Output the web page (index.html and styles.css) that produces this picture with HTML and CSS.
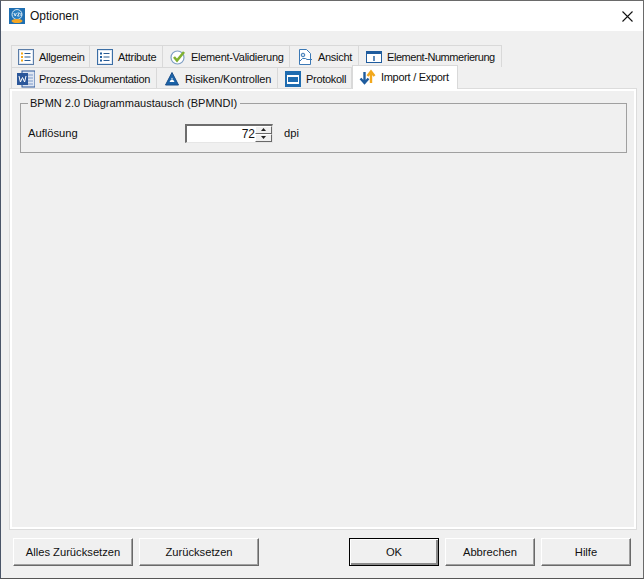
FILE: index.html
```html
<!DOCTYPE html>
<html lang="de">
<head>
<meta charset="utf-8">
<title>Optionen</title>
<link rel="stylesheet" href="styles.css">
</head>
<body>
<div class="window">
  <header class="titlebar">
    <svg class="appicon" width="16" height="16" viewBox="0 0 16 16"><rect width="16" height="16" fill="#1f6fb2"/><circle cx="8" cy="6.5" r="5" fill="#2a7fc0" stroke="#d5e6f3" stroke-width="1"/><path d="M5 5l1.2 3L7.4 5M8.5 5h2l-2 3h2M12 5v3" fill="none" stroke="#fff" stroke-width=".8"/><ellipse cx="8" cy="13" rx="5.5" ry="2" fill="#f5a623"/></svg>
    <span class="title">Optionen</span>
    <svg class="close" width="11" height="11" viewBox="0 0 11 11"><path d="M.5.5l10 10M10.500.5l-10 10" stroke="#111" stroke-width="1.1" fill="none"/></svg>
  </header>
  <main class="content">
    <div class="tabs">
      <div class="tabrow">
        <div class="tab w79"><svg class="ico" viewBox="0 0 16 16"><rect x=".5" y=".5" width="15" height="15" fill="#dfe8f3" stroke="#5b7da8"/><rect x="2" y="2" width="12" height="12" fill="#fff"/><path d="M6.500 4.500h6M6.500 8h6M6.500 11.500h6" stroke="#2b5c94"/><path d="M3 4.500h2M3 8h2M3 11.500h2" stroke="#f2a81d" stroke-width="2"/></svg>Allgemein</div>
        <div class="tab w73"><svg class="ico" viewBox="0 0 16 16"><rect x=".5" y=".5" width="15" height="15" fill="#dfe8f3" stroke="#3b6ea5"/><rect x="2" y="2" width="12" height="12" fill="#fff"/><path d="M6.500 4.500h6M6.500 8h6M6.500 11.500h6" stroke="#2b5c94"/><path d="M3 4.500h2M3 8h2M3 11.500h2" stroke="#1f5c9e" stroke-width="2"/></svg>Attribute</div>
        <div class="tab w127"><svg class="ico" viewBox="0 0 16 16"><circle cx="7.500" cy="8.500" r="6.500" fill="#fff" stroke="#7f9fc4" stroke-width="1.2"/><path d="M4 8l3 3.500L14 3" fill="none" stroke="#80b030" stroke-width="2.6"/></svg>Element-Validierung</div>
        <div class="tab w69"><svg class="ico" viewBox="0 0 16 16"><path d="M2.500.5h7l4 4v11h-11z" fill="#fff" stroke="#3b78b5"/><circle cx="6" cy="6" r="1.800" fill="#cfe0f0" stroke="#3b78b5"/><path d="M2.500 12.500l3-3h3l1.500 1h5" fill="none" stroke="#3b78b5"/></svg>Ansicht</div>
        <div class="tab w143 tight"><svg class="ico" viewBox="0 0 16 16"><rect x=".5" y="2.500" width="15" height="11" fill="#fff" stroke="#1f5c9e"/><rect x="0" y="2" width="16" height="3" fill="#1f5c9e"/><path d="M8 7v5" stroke="#1f5c9e" stroke-width="1.400"/></svg>Element-Nummerierung</div>
      </div>
      <div class="tabrow">
        <div class="tab w146"><svg class="ico ico-wide" viewBox="0 0 18 18"><rect x="5" y="1" width="13" height="16" fill="#dfe6f2" stroke="#2b579a"/><path d="M11 5h5M11 8h5M11 11h5M11 14h5" stroke="#7c9ac9"/><rect x="0" y="3" width="11" height="12" fill="#2b579a"/><path d="M2 6l1.400 6L5.500 7.500 7.600 12 9 6" fill="none" stroke="#fff"/></svg>Prozess-Dokumentation</div>
        <div class="tab w121 loose"><svg class="ico" viewBox="0 0 16 16"><path d="M8 1.500l6.500 12.500h-13z" fill="#1a62a8" stroke="#1a4f8a"/><path d="M8 6.500l1 2h-2zM5.500 11h5l-1.200-2h-2.600z" fill="#fff"/></svg>Risiken/Kontrollen</div>
        <div class="tab w74"><svg class="ico ico-wide" viewBox="0 0 18 18"><rect x="1" y="1" width="16" height="16" fill="#1f6cb0"/><rect x="3" y="5" width="12" height="9" fill="#fff"/><rect x="4" y="7" width="10" height="5" fill="#1f6cb0"/></svg>Protokoll</div>
        <div class="tab tab-active w106"><svg class="ico ico-arrows" viewBox="0 0 18 16"><path d="M5.500 3v11M1.500 9.500l4 4.500 4-4.500" fill="none" stroke="#1f5c9e" stroke-width="2.400"/><path d="M12 14V3M8.500 7l3.500-4.500L15.500 7" fill="none" stroke="#f2a81d" stroke-width="2.400"/></svg>Import / Export</div>
      </div>
    </div>
    <section class="panel">
      <fieldset class="group">
        <legend class="legend">BPMN 2.0 Diagrammaustausch (BPMNDI)</legend>
        <div class="field">
          <label class="label">Auflösung</label>
          <div class="spin">
            <span class="spinvalue">72</span>
            <span class="spinbtns">
              <span class="spinbtn"><svg width="5" height="3" viewBox="0 0 5 3"><path d="M2.500 0L5 3H0z" fill="#222"/></svg></span>
              <span class="spinbtn"><svg width="5" height="3" viewBox="0 0 5 3"><path d="M0 0h5L2.500 3z" fill="#222"/></svg></span>
            </span>
          </div>
          <span class="unit">dpi</span>
        </div>
      </fieldset>
    </section>
    <footer class="actions">
      <div class="actions-group">
        <button class="btn btn-wide">Alles Zurücksetzen</button>
        <button class="btn btn-wide">Zurücksetzen</button>
      </div>
      <div class="actions-group">
        <button class="btn btn-default">OK</button>
        <button class="btn">Abbrechen</button>
        <button class="btn">Hilfe</button>
      </div>
    </footer>
  </main>
</div>
</body>
</html>
```

FILE: styles.css
```css
* { box-sizing: border-box; }
html, body { margin: 0; padding: 0; background: #fff; }
body { width: 644px; height: 580px; overflow: hidden; font-family: "Liberation Sans", Arial, sans-serif; font-size: 11.2px; color: #111; }
.window { width: 644px; height: 579px; border: 1px solid #6a6a6a; border-left-color: #4a5568; border-bottom-color: #555; display: flex; flex-direction: column; background: #f0f0f0; }
.titlebar { height: 30px; flex: none; background: #fff; display: flex; align-items: center; padding: 0 10px 0 8px; }
.appicon { flex: none; }
.title { margin-left: 5px; font-size: 12px; flex: 1; }
.content { flex: 1; display: flex; flex-direction: column; padding: 14px 7px 0 9px; }
.tabs { display: flex; flex-direction: column; height: 44px; padding-left: 1px; flex: none; }
.tabrow { display: flex; height: 22px; }
.tab { height: 22px; display: flex; align-items: center; padding: 1px 0 0 7px; border: 1px solid #d9d9d9; border-width: 1px 1px 0 0; white-space: nowrap; background: #f0f0f0; font-size: 11px; letter-spacing: -0.3px; }
.tab.tight { letter-spacing: -0.45px; }
.tab.loose { letter-spacing: -0.13px; }
.tabrow .tab:first-child { border-left: 1px solid #d9d9d9; padding-left: 6px; }
.tab-active { background: #fff; height: 24px; margin-top: -2px; position: relative; z-index: 1; padding: 0 0 2px 6px; border-left: 1px solid #d9d9d9; }
.ico { width: 16px; height: 16px; flex: none; margin-right: 5px; }
.ico-wide { width: 18px; height: 18px; margin-left: -1px; margin-right: 4px; }
.ico-arrows { width: 18px; margin-right: 4px; }
.w79 { width: 79px; } .w73 { width: 73px; } .w127 { width: 127px; } .w69 { width: 69px; } .w143 { width: 143px; }
.w146 { width: 146px; } .w121 { width: 121px; } .w74 { width: 74px; } .w106 { width: 106px; }
.panel { height: 440px; flex: none; border: 2px solid #fff; padding: 5px 7px 0 8px; box-shadow: 0 0 0 1px #dcdcdc; }
.group { margin: 0; padding: 0 7px; height: 57px; border: 1px solid #a0a0a0; min-width: 0; }
.legend { padding: 0 3px 0 2px; margin-left: 0; line-height: 14px; font-size: 11px; }
.field { display: flex; align-items: center; height: 18px; margin-top: 14px; }
.label { width: 157px; flex: none; padding-bottom: 1px; }
.spin { width: 88px; height: 19px; flex: none; display: flex; background: #fff; border: 2px solid #6d6d6d; border-right: 1px solid #e6e6e6; border-bottom: 1px solid #e6e6e6; }
.spinvalue { flex: 1; text-align: right; line-height: 16px; font-size: 12px; }
.spinbtns { width: 17px; display: flex; flex-direction: column; flex: none; gap: 0; }
.spinbtn { flex: 1; display: flex; align-items: center; justify-content: center; background: #f0f0f0; border: 1px solid; border-color: #fff #696969 #696969 #fff; }
.unit { margin-left: 11px; }
.actions { display: flex; justify-content: space-between; padding: 9px 5px 0 3px; }
.actions-group { display: flex; gap: 6px; }
.btn { width: 90px; height: 28px; font: inherit; color: #111; background: #f0f0f0; border: 1px solid; border-color: #fff #696969 #696969 #fff; box-shadow: inset -1px -1px 0 #a0a0a0; padding: 0; }
.btn-wide { width: 120px; }
.btn-default { border: 1px solid #000; box-shadow: inset 1px 1px 0 #fff, inset -2px -2px 0 #8a8a8a; }
```
